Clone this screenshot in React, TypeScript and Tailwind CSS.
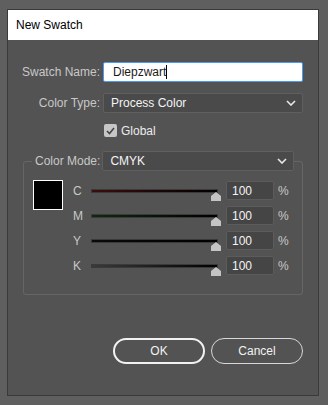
const font = { fontFamily: '"Segoe UI", "Liberation Sans", Arial, sans-serif' };

function Chevron() {
  return (
    <svg width="10" height="6" viewBox="0 0 10 6" className="shrink-0">
      <path d="M1 1 L5 5 L9 1" fill="none" stroke="#e8e8e8" strokeWidth="1.6" />
    </svg>
  );
}

function Select({ value, className }: { value: string; className: string }) {
  return (
    <div
      className={`h-[20px] flex items-center justify-between pl-[7px] pr-[6px] bg-[#4a4a4a] border border-[#5f5f5f] rounded-[2px] text-[12px] text-[#f4f4f4] ${className}`}
    >
      <span>{value}</span>
      <Chevron />
    </div>
  );
}

const rows = [
  { label: "C", from: "#3d0d0d" },
  { label: "M", from: "#0f2a10" },
  { label: "Y", from: "#0a0a0a" },
  { label: "K", from: "#3a3a3a" },
];

function SliderRow({ label, from }: { label: string; from: string }) {
  return (
    <div className="flex items-center h-[19px]">
      <span className="w-[18px] text-[12px] text-[#c8c8c8]">{label}</span>
      <div className="relative w-[127px] h-[19px] flex items-center">
        <div
          className="w-full h-[4px] border border-[#3a3a3a]"
          style={{ background: `linear-gradient(to right, ${from}, #000)` }}
        />
        <svg width="10" height="9" viewBox="0 0 10 9" className="absolute right-[-3px] top-[11px]">
          <path d="M5 0 L10 4 L10 9 L0 9 L0 4 Z" fill="#c4c4c4" />
        </svg>
      </div>
      <div className="ml-[8px] w-[48px] h-[19px] flex items-center pl-[5px] bg-[#454545] border border-[#5c5c5c] rounded-[2px] text-[12px] text-[#f4f4f4]">
        100
      </div>
      <span className="ml-[4px] text-[12px] text-[#c8c8c8]">%</span>
    </div>
  );
}

export default function App() {
  return (
    <div className="w-[328px] h-[405px] bg-[#5f5f5f] pt-[9px] pl-[7px]" style={font}>
      <div className="w-[312px] h-[387px] border border-[#3a3a3a] flex flex-col bg-[#535353]">
        <div className="h-[30px] bg-white flex items-center pl-[8px] text-[12px] text-black">New Swatch</div>

        <div className="flex flex-col pt-[22px]">
          <div className="flex items-center">
            <span className="w-[95px] text-right pr-[3px] text-[12px] text-[#c8c8c8]">Swatch Name:</span>
            <div className="w-[200px] h-[20px] bg-white border border-[#4b9cf0] rounded-[2px] flex items-center pl-[9px] text-[12px] text-[#1a1a1a]">
              Diepzwart<span className="w-px h-[14px] bg-black" />
            </div>
          </div>

          <div className="flex items-center mt-[11px]">
            <span className="w-[95px] text-right pr-[3px] text-[12px] text-[#c8c8c8]">Color Type:</span>
            <Select value="Process Color" className="w-[200px]" />
          </div>

          <div className="flex items-center mt-[11px] pl-[96px] h-[13px]">
            <div className="w-[13px] h-[13px] bg-[#c6c6c6] rounded-[2px] flex items-center justify-center">
              <svg width="9" height="8" viewBox="0 0 9 8">
                <path d="M1 4 L3.5 6.5 L8 1" fill="none" stroke="#444" strokeWidth="1.6" />
              </svg>
            </div>
            <span className="ml-[4px] text-[12px] text-[#ececec]">Global</span>
          </div>

          <div className="ml-[15px] mt-[24px] w-[280px] h-[134px] border border-[#666666] rounded-[3px]">
            <div className="flex items-center -mt-[11px]">
              <span className="ml-[8px] px-[3px] bg-[#535353] text-[12px] text-[#c8c8c8]">Color Mode:</span>
              <Select value="CMYK" className="-ml-[1px] w-[192px]" />
            </div>
            <div className="flex mt-[9px] pl-[9px]">
              <div className="w-[30px] h-[30px] bg-black border border-white shrink-0" />
              <div className="ml-[10px] mt-px flex flex-col gap-[6px]">
                {rows.map((r) => (
                  <SliderRow key={r.label} label={r.label} from={r.from} />
                ))}
              </div>
            </div>
          </div>

          <div className="flex justify-end gap-[6px] pr-[15px] mt-[43px]">
            <button className="w-[92px] h-[26px] rounded-full border-2 border-[#f2f2f2] text-[12px] text-[#f2f2f2]">
              OK
            </button>
            <button className="w-[92px] h-[26px] rounded-full border border-[#d8d8d8] text-[12px] text-[#f2f2f2]">
              Cancel
            </button>
          </div>
        </div>
      </div>
    </div>
  );
}
